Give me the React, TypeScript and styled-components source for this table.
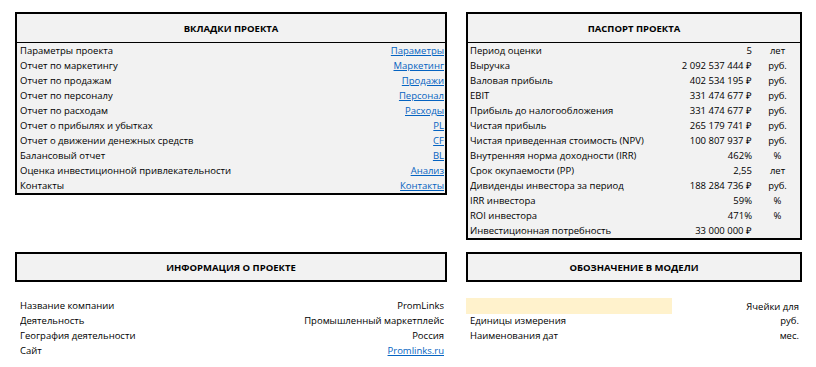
import React from 'react';
import styled, { createGlobalStyle } from 'styled-components';

const GlobalStyle = createGlobalStyle`
    html, body {
        margin: 0;
        background: #ffffff;
    }
    body {
        font-family: 'Open Sans', 'Liberation Sans', sans-serif;
        font-size: 9.5px;
        color: #000;
    }
`;

const Page = styled.div`
    display: grid;
    grid-template-columns: 432px 336px;
    grid-template-rows: 240px auto;
    column-gap: 19px;
    padding: 12px 0 0 15px;
    width: 816px;
    height: 367px;
    box-sizing: border-box;
`;

const Panel = styled.div`
    align-self: start;
    border: 2px solid #000;
    background: #f2f2f2;
`;

const PanelHeader = styled.div`
    height: 28px;
    display: flex;
    align-items: center;
    justify-content: center;
    font-weight: 700;
    border-bottom: 1px solid #000;
`;

const Section = styled.div`
    display: flex;
    flex-direction: column;
`;

const SectionHeader = styled.div`
    height: 26px;
    display: flex;
    align-items: center;
    justify-content: center;
    font-weight: 700;
    border: 2px solid #000;
    background: #f2f2f2;
    margin-bottom: 16px;
`;

const Row = styled.div<{ $cols: string; $pad: string }>`
    display: grid;
    grid-template-columns: ${(p) => p.$cols};
    align-items: center;
    height: 15px;
    padding: ${(p) => p.$pad};
    white-space: nowrap;
`;

const Cell = styled.span<{ $align?: string; $padRight?: number }>`
    text-align: ${(p) => p.$align || 'left'};
    padding-right: ${(p) => p.$padRight || 0}px;
    overflow: hidden;
`;

const TabLink = styled.a`
    text-align: right;
    color: #0563c1;
    text-decoration: underline;
    text-underline-offset: 1px;
`;

const Swatch = styled.div`
    height: 16px;
    background: #fff2cc;
`;

const tabs = [
    ['Параметры проекта', 'Параметры'],
    ['Отчет по маркетингу', 'Маркетинг'],
    ['Отчет по продажам', 'Продажи'],
    ['Отчет по персоналу', 'Персонал'],
    ['Отчет по расходам', 'Расходы'],
    ['Отчет о прибылях и убытках', 'PL'],
    ['Отчет о движении денежных средств', 'CF'],
    ['Балансовый отчет', 'BL'],
    ['Оценка инвестиционной привлекательности', 'Анализ'],
    ['Контакты', 'Контакты'],
];

const passport = [
    ['Период оценки', '5', 'лет'],
    ['Выручка', '2 092 537 444 ₽', 'руб.'],
    ['Валовая прибыль', '402 534 195 ₽', 'руб.'],
    ['EBIT', '331 474 677 ₽', 'руб.'],
    ['Прибыль до налогообложения', '331 474 677 ₽', 'руб.'],
    ['Чистая прибыль', '265 179 741 ₽', 'руб.'],
    ['Чистая приведенная стоимость (NPV)', '100 807 937 ₽', 'руб.'],
    ['Внутренняя норма доходности (IRR)', '462%', '%'],
    ['Срок окупаемости (PP)', '2,55', 'лет'],
    ['Дивиденды инвестора за период', '188 284 736 ₽', 'руб.'],
    ['IRR инвестора', '59%', '%'],
    ['ROI инвестора', '471%', '%'],
    ['Инвестиционная потребность', '33 000 000 ₽', ''],
];

const info = [
    ['Название компании', 'PromLinks'],
    ['Деятельность', 'Промышленный маркетплейс'],
    ['География деятельности', 'Россия'],
];

const legend = [
    ['Единицы измерения', 'руб.'],
    ['Наименования дат', 'мес.'],
];

const App: React.FC = () => {
    return (
        <>
            <GlobalStyle />
            <Page>
                <Panel>
                    <PanelHeader>ВКЛАДКИ ПРОЕКТА</PanelHeader>
                    {tabs.map(([label, link]) => (
                        <Row key={label} $cols="1fr auto" $pad="0 1px 0 3px">
                            <Cell>{label}</Cell>
                            <TabLink href="#">{link}</TabLink>
                        </Row>
                    ))}
                </Panel>

                <Panel>
                    <PanelHeader>ПАСПОРТ ПРОЕКТА</PanelHeader>
                    {passport.map(([label, value, unit]) => (
                        <Row key={label} $cols="1fr 100px 45px" $pad="0 0 0 2px">
                            <Cell>{label}</Cell>
                            <Cell $align="right" $padRight={3}>{value}</Cell>
                            <Cell $align="center">{unit}</Cell>
                        </Row>
                    ))}
                </Panel>

                <Section>
                    <SectionHeader>ИНФОРМАЦИЯ О ПРОЕКТЕ</SectionHeader>
                    {info.map(([label, value]) => (
                        <Row key={label} $cols="1fr auto" $pad="0 3px 0 5px">
                            <Cell>{label}</Cell>
                            <Cell $align="right">{value}</Cell>
                        </Row>
                    ))}
                    <Row $cols="1fr auto" $pad="0 3px 0 5px">
                        <Cell>Сайт</Cell>
                        <TabLink href="#">Promlinks.ru</TabLink>
                    </Row>
                </Section>

                <Section>
                    <SectionHeader>ОБОЗНАЧЕНИЕ В МОДЕЛИ</SectionHeader>
                    <Row $cols="206px 1fr" $pad="0 3px 0 0">
                        <Swatch />
                        <Cell $align="right">Ячейки для</Cell>
                    </Row>
                    {legend.map(([label, value]) => (
                        <Row key={label} $cols="1fr auto" $pad="0 3px 0 4px">
                            <Cell>{label}</Cell>
                            <Cell $align="right">{value}</Cell>
                        </Row>
                    ))}
                </Section>
            </Page>
        </>
    );
};

export default App;
